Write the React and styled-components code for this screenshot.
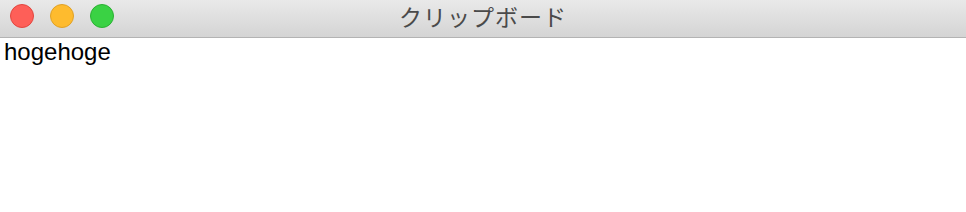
import styled, { createGlobalStyle } from 'styled-components';

const GlobalStyle = createGlobalStyle`
    html, body {
        margin: 0;
        padding: 0;
        background: #ffffff;
    }
    body {
        font-family: "Liberation Sans", Arial, "Noto Sans CJK JP", sans-serif;
    }
`;

const Ventana = styled.div`
    width: 966px;
    height: 212px;
    display: flex;
    flex-direction: column;
    background: #ffffff;
`;

const BarraTitulo = styled.div`
    position: relative;
    height: 38px;
    flex-shrink: 0;
    display: flex;
    align-items: center;
    justify-content: center;
    background: linear-gradient(to bottom, #e9e9e9, #d4d4d4);
    border-bottom: 1px solid #b3b3b3;
    box-sizing: border-box;
`;

const Botones = styled.div`
    position: absolute;
    left: 10px;
    top: 4px;
    display: flex;
    gap: 16px;
`;

const Boton = styled.span`
    width: 24px;
    height: 24px;
    border-radius: 50%;
    box-sizing: border-box;
    background: ${(p) => p.color};
    border: 1px solid ${(p) => p.borde};
`;

const Titulo = styled.h1`
    margin: 0;
    margin-top: -5px;
    font-family: "Noto Sans CJK JP", sans-serif;
    font-size: 23px;
    font-weight: 400;
    color: #4a4a4a;
    letter-spacing: 1px;
`;

const Contenido = styled.div`
    padding: 0 4px;
    font-size: 24px;
    color: #000000;
    line-height: 28px;
`;

const App = () => {
    return (
        <Ventana>
            <GlobalStyle />
            <BarraTitulo>
                <Botones>
                    <Boton color="#fe5f58" borde="#e2463f" />
                    <Boton color="#febb2e" borde="#e0a126" />
                    <Boton color="#3ad244" borde="#2bb133" />
                </Botones>
                <Titulo>クリップボード</Titulo>
            </BarraTitulo>
            <Contenido>hogehoge</Contenido>
        </Ventana>
    );
};

export default App;
